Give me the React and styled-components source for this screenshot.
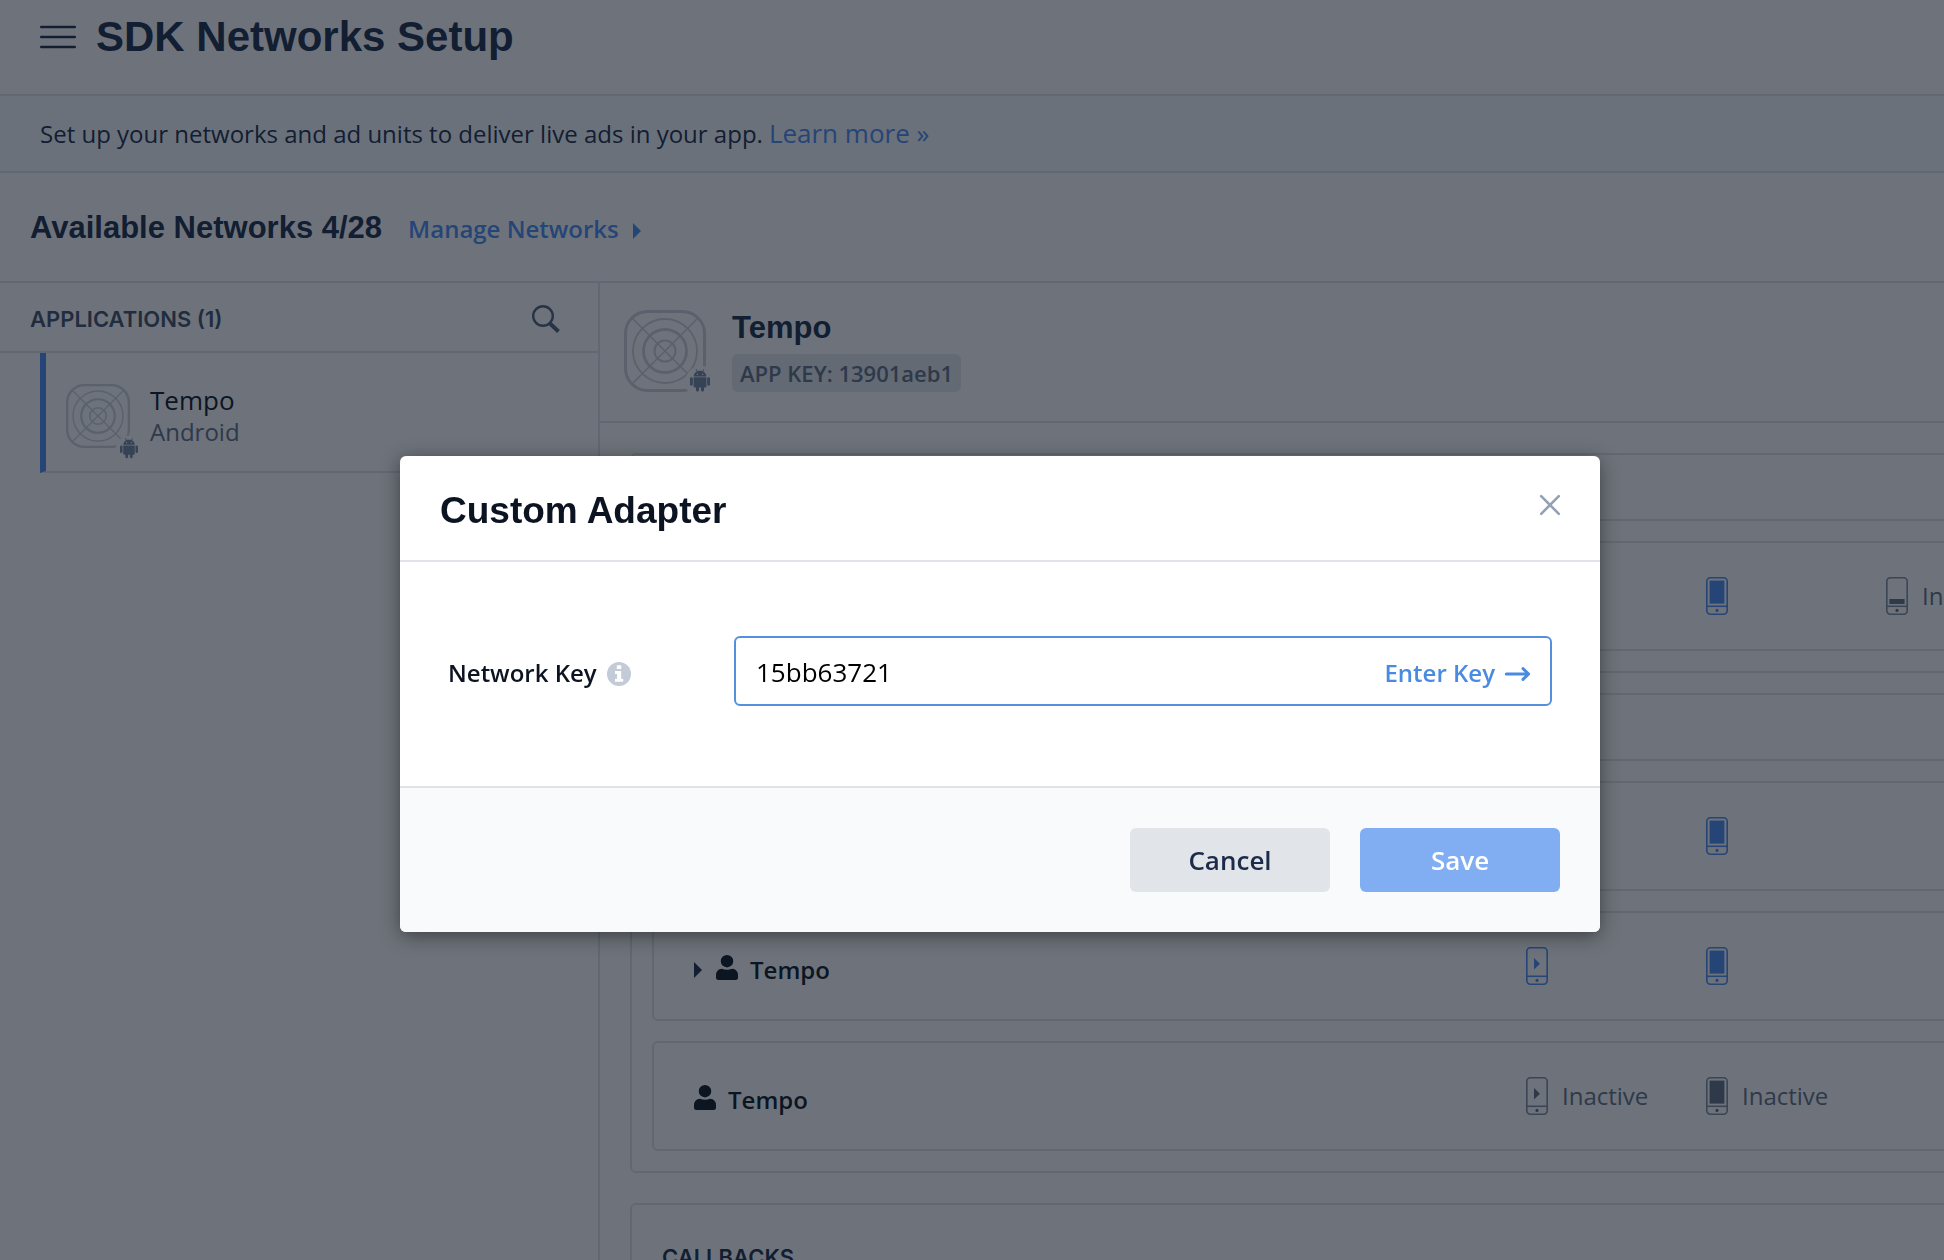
import React, { useId } from "react";
import styled, { createGlobalStyle, css } from "styled-components";

const sans = '"Open Sans", "Noto Sans", sans-serif';
const display = '"Liberation Sans", Arial, sans-serif';

const c = {
  ink: "#1b2b48",
  text: "#0c1422",
  slate: "#5f6f86",
  muted: "#7e8ca0",
  line: "#e0e4ea",
  blue: "#4a8cf4",
};

const GlobalStyle = createGlobalStyle`
  *, *::before, *::after { box-sizing: border-box; }
  body { margin: 0; background: #fff; font-family: ${sans}; color: ${c.ink}; overflow: hidden; }
  button, input { font: inherit; }
  h1, h2, h3, p { margin: 0; }
  svg { display: block; flex: none; overflow: visible; }
`;

const Page = styled.div`
  height: 100vh;
  overflow: hidden;
  display: flex;
  flex-direction: column;
`;

const IconButton = styled.button`
  display: flex;
  padding: 0;
  border: 0;
  background: none;
  color: ${(p) => p.$color};
  cursor: pointer;
`;

const TopBar = styled.header`
  display: flex;
  align-items: center;
  gap: 20px;
  flex: none;
  height: 96px;
  padding: 0 40px 20px;
  border-bottom: 2px solid ${c.line};
`;

const PageTitle = styled.h1`
  font: 700 42px/48px ${display};
`;

const Notice = styled.div`
  display: flex;
  align-items: baseline;
  gap: 6px;
  flex: none;
  padding: 20px 40px;
  background: #f4fbff;
  border-bottom: 2px solid ${c.line};
  font-size: 24px;
  line-height: 35px;
`;

const NoticeLink = styled.a`
  color: ${c.blue};
  font-size: 26px;
  text-decoration: none;
`;

const NetworksBar = styled.section`
  display: flex;
  align-items: baseline;
  gap: 26px;
  flex: none;
  height: 110px;
  padding: 37px 30px 0;
  border-bottom: 2px solid ${c.line};
`;

const SectionTitle = styled.h2`
  font: 700 31px/36px ${display};
`;

const ManageLink = styled.a`
  display: flex;
  align-items: center;
  gap: 14px;
  color: ${c.blue};
  font-size: 24px;
  font-weight: 600;
  line-height: 36px;
  text-decoration: none;
`;

const Columns = styled.div`
  display: grid;
  grid-template-columns: 600px minmax(0, 1fr);
  flex: 1;
  min-height: 0;
`;

const Sidebar = styled.aside`
  border-right: 2px solid ${c.line};
`;

const SidebarHead = styled.div`
  display: flex;
  align-items: center;
  justify-content: space-between;
  height: 70px;
  padding: 4px 38px 0 30px;
  border-bottom: 2px solid ${c.line};
`;

const CapsTitle = styled.h3`
  font: 600 22px/30px Inter, ${display};
  color: ${(p) => p.$color};
`;

const AppItem = styled.a`
  display: flex;
  align-items: center;
  gap: 20px;
  height: 120px;
  margin-left: 40px;
  padding: 8px 20px 0;
  border-left: 6px solid ${c.blue};
  border-bottom: 2px solid ${c.line};
  background: #fcfdfe;
  color: ${c.text};
  text-decoration: none;
`;

const AppText = styled.div`
  display: flex;
  flex-direction: column;
  font-size: 26px;
  line-height: 32px;
`;

const Platform = styled.span`
  color: ${c.slate};
  font-size: 24px;
`;

const Main = styled.main`
  min-width: 0;
  overflow: hidden;
`;

const AppHeader = styled.div`
  display: flex;
  align-items: center;
  gap: 26px;
  height: 140px;
  padding: 0 24px 2px;
  border-bottom: 2px solid ${c.line};
`;

const AppMeta = styled.div`
  display: flex;
  flex-direction: column;
  align-items: flex-start;
  gap: 8px;
`;

const KeyTag = styled.span`
  padding: 0 8px;
  border-radius: 6px;
  background: #e3e8ee;
  color: ${c.slate};
  font-size: 22px;
  font-weight: 600;
  line-height: 38px;
`;

const Boards = styled.div`
  display: flex;
  flex-direction: column;
  width: max-content;
  min-width: 100%;
  padding: 30px;
`;

const Board = styled.section`
  border: 2px solid ${c.line};
  border-radius: 6px;
  margin-bottom: ${(p) => p.$after}px;
`;

const BoardHead = styled.div`
  height: 66px;
  border-bottom: 2px solid ${c.line};
`;

const Rows = styled.div`
  display: flex;
  flex-direction: column;
  gap: 20px;
  padding: 20px;
`;

const Row = styled.div`
  display: grid;
  grid-template-columns: 832px repeat(4, 180px);
  align-items: center;
  height: 110px;
  padding: 0 40px;
  border: 2px solid ${c.line};
  border-radius: 6px;
`;

const Instance = styled.div`
  display: flex;
  align-items: center;
  gap: 12px;
  padding-top: 3px;
  color: ${c.text};
  font-size: 24px;
  font-weight: 600;
`;

const Expander = styled(IconButton)`
  padding-right: 2px;
`;

const InstanceName = styled.span`
  padding-top: 4px;
`;

const AdUnit = styled.div`
  display: flex;
  align-items: center;
  gap: 14px;
  color: ${(p) => (p.$active ? c.blue : c.muted)};
  font-size: 24px;
`;

const Status = styled.span`
  padding-bottom: 2px;
  color: ${c.slate};
`;

const Callbacks = styled.div`
  height: 120px;
  padding: 37px 30px;
`;

const Overlay = styled.div`
  position: fixed;
  inset: 0;
  display: flex;
  align-items: flex-start;
  justify-content: center;
  padding: 456px 0 0 56px;
  background: rgba(13, 22, 35, 0.6);
`;

const Modal = styled.div`
  width: 1200px;
  border-radius: 6px;
  overflow: hidden;
  background: #fff;
  box-shadow: 0 4px 20px rgba(0, 0, 0, 0.45);
`;

const ModalHead = styled.div`
  display: flex;
  justify-content: space-between;
  height: 106px;
  padding: 32px 40px 0;
  border-bottom: 2px solid ${c.line};
`;

const ModalTitle = styled.h2`
  font: 700 37px/46px ${display};
  color: ${c.text};
`;

const CloseButton = styled(IconButton)`
  align-self: flex-start;
  padding-top: 7px;
`;

const ModalBody = styled.div`
  display: grid;
  grid-template-columns: 286px minmax(0, 1fr);
  align-items: center;
  padding: 74px 48px 80px;
`;

const FieldLabel = styled.div`
  display: flex;
  align-items: center;
  gap: 10px;
  padding-top: 5px;
  color: ${c.text};
  font-size: 24px;
  font-weight: 600;
`;

const KeyLabel = styled.label`
  padding-bottom: 2px;
`;

const Field = styled.div`
  display: flex;
  align-items: center;
  height: 70px;
  padding: 0 20px;
  border: 2px solid #5590df;
  border-radius: 6px;
`;

const KeyInput = styled.input`
  flex: 1;
  min-width: 0;
  padding: 2px 0 0;
  border: 0;
  outline: 0;
  background: none;
  color: #000;
  font-size: 26px;
`;

const EnterButton = styled.button`
  display: flex;
  align-items: center;
  gap: 10px;
  padding: 5px 0 0;
  border: 0;
  background: none;
  color: #4a8be2;
  font-size: 24px;
  font-weight: 600;
`;

const EnterText = styled.span`
  padding-bottom: 2px;
`;

const ModalFoot = styled.div`
  display: flex;
  justify-content: flex-end;
  gap: 30px;
  padding: 40px;
  border-top: 2px solid ${c.line};
  background: #f9fafc;
`;

const Button = styled.button`
  width: 200px;
  height: 64px;
  padding: 0;
  border: 0;
  border-radius: 6px;
  background: #e1e4e9;
  color: #1b2b48;
  font-size: 26px;
  font-weight: 600;
  ${(p) =>
    p.$primary &&
    css`
      background: #81aef3;
      color: #fff;
    `}
`;

const Caret = () => (
  <svg width="8" height="20" viewBox="0 0 8 20" fill="currentColor" aria-hidden="true">
    <path d="M0 4L8 12L0 20Z" />
  </svg>
);

const MenuIcon = () => (
  <svg width="36" height="22" viewBox="0 0 36 22" stroke="currentColor" strokeWidth="2.4" strokeLinecap="round" aria-hidden="true">
    <path d="M1.2 1H34.8M1.2 11H34.8M1.2 21H34.8" />
  </svg>
);

const SearchIcon = () => (
  <svg width="28" height="28" viewBox="0 0 28 28" fill="none" stroke="currentColor" aria-hidden="true">
    <circle cx="11" cy="11" r="9.8" strokeWidth="2.4" />
    <path d="M18 18.500L26.500 26.500" strokeWidth="4" />
  </svg>
);

function AppIcon({ size, badge }) {
  const id = useId();
  const k = size / 82;
  return (
    <svg width={size} height={size} viewBox={`0 0 ${size} ${size}`} fill="none" aria-hidden="true">
      <mask id={id} maskUnits="userSpaceOnUse" x="0" y="0" width={size} height={size}>
        <rect width={size} height={size} fill="#fff" />
        <circle cx={badge.x + badge.w / 2 + 1} cy={badge.y + badge.w / 2 + 3} r={badge.w * 0.8} fill="#000" />
      </mask>
      <g mask={`url(#${id})`} stroke="#cdd2db">
        <g transform={`scale(${k})`}>
          <rect x="1.5" y="1.5" width="79" height="79" rx="22" strokeWidth="3" />
          <circle cx="41" cy="41" r="32" strokeWidth="1.8" />
          <circle cx="41" cy="41" r="21.5" strokeWidth="2.8" />
          <circle cx="41" cy="41" r="10.5" strokeWidth="2" />
          <path d="M8 8L74 74M74 8L8 74" strokeWidth="1.6" />
        </g>
      </g>
      <g transform={`translate(${badge.x} ${badge.y}) scale(${badge.w / 20})`} fill="#7385a0">
        <path d="M3.6 7.6C3.7 5.2 5 3.4 6.8 2.5L5.6 .5L6.2 .1L7.5 2.2C9 1.7 11 1.7 12.5 2.2L13.8 .1L14.4 .5L13.2 2.5C15 3.4 16.3 5.2 16.4 7.6ZM7.3 4.500A.7.7 0 1 0 7.3 5.900A.7.7 0 1 0 7.3 4.500ZM12.7 4.500A.7.7 0 1 0 12.7 5.900A.7.7 0 1 0 12.7 4.500Z" fillRule="evenodd" />
        <path d="M3.600 8.300H16.400V17.500Q16.400 18.600 15.300 18.600H4.700Q3.600 18.600 3.600 17.500Z" />
        <rect x="0" y="8.300" width="2.800" height="8.400" rx="1.400" />
        <rect x="17.200" y="8.300" width="2.800" height="8.400" rx="1.400" />
        <rect x="6" y="16" width="3" height="6.500" rx="1.500" />
        <rect x="11" y="16" width="3" height="6.500" rx="1.500" />
      </g>
    </svg>
  );
}

const PersonIcon = () => (
  <svg width="22" height="25" viewBox="0 0 22 25" fill="currentColor" aria-hidden="true">
    <circle cx="11" cy="6.200" r="6.200" />
    <path d="M6 13.800Q11 15.600 16 13.800Q22 14.200 22 20.500V22.500Q22 25 19.500 25H2.500Q0 25 0 22.500V20.500Q0 14.200 6 13.800Z" />
  </svg>
);

const PhoneIcon = ({ kind, active }) => {
  const fill = active ? "currentColor" : c.slate;
  return (
    <svg width="22" height="38" viewBox="0 0 22 38" fill="none" stroke="currentColor" strokeWidth="1.600" aria-hidden="true">
      <rect x=".8" y=".8" width="20.400" height="36.400" rx="3.600" />
      <path d="M1 29.300H21" />
      <circle cx="11" cy="33.400" r="1.600" fill={fill} stroke="none" />
      {kind === "full" && <rect x="3.600" y="3.600" width="14.800" height="23" fill={fill} stroke="none" />}
      {kind === "video" && <path d="M8 11L14 16.800L8 22.500Z" fill={fill} stroke="none" />}
      {kind === "banner" && <rect x="3.400" y="22" width="15.200" height="5" fill={fill} stroke="none" />}
    </svg>
  );
};

const CloseIcon = () => (
  <svg width="20" height="20" viewBox="0 0 20 20" stroke="currentColor" strokeWidth="2.600" strokeLinecap="round" aria-hidden="true">
    <path d="M1.200 1.200L18.800 18.800M18.800 1.200L1.200 18.800" />
  </svg>
);

const InfoIcon = () => (
  <svg width="24" height="24" viewBox="0 0 24 24" aria-hidden="true">
    <circle cx="12" cy="12" r="12" fill="#c3cbd6" />
    <path d="M9.800 3.200H14.200V7H9.800ZM8 9H14.200V16.800H16.200V19.800H8V16.800H10V12H8Z" fill="#fff" />
  </svg>
);

const ArrowIcon = () => (
  <svg width="25" height="14" viewBox="0 0 25 14" fill="none" stroke="currentColor" strokeWidth="3" strokeLinecap="round" strokeLinejoin="round" aria-hidden="true">
    <path d="M1.300 7H23M18 1.600L23.600 7L18 12.400" />
  </svg>
);

const Unit = ({ kind, active }) => (
  <AdUnit $active={active}>
    <PhoneIcon kind={kind} active={active} />
    {!active && <Status>Inactive</Status>}
  </AdUnit>
);

const boards = [
  { after: 20, rows: [{ units: [["video", true], ["full", true], ["banner", false]] }] },
  {
    after: 30,
    rows: [
      { units: [["video", true], ["full", true]] },
      { name: "Tempo", expandable: true, units: [["video", true], ["full", true]] },
      { name: "Tempo", units: [["video", false], ["full", false]] },
    ],
  },
];

export default function App() {
  return (
    <>
      <GlobalStyle />
      <Page>
        <TopBar>
          <IconButton $color={c.ink} aria-label="Menu">
            <MenuIcon />
          </IconButton>
          <PageTitle>SDK Networks Setup</PageTitle>
        </TopBar>
        <Notice>
          <p>Set up your networks and ad units to deliver live ads in your app.</p>
          <NoticeLink href="#learn">Learn more »</NoticeLink>
        </Notice>
        <NetworksBar>
          <SectionTitle>Available Networks 4/28</SectionTitle>
          <ManageLink href="#manage">
            Manage Networks
            <Caret />
          </ManageLink>
        </NetworksBar>
        <Columns>
          <Sidebar>
            <SidebarHead>
              <CapsTitle $color="#3f5068">APPLICATIONS (1)</CapsTitle>
              <IconButton $color="#50627c" aria-label="Search applications">
                <SearchIcon />
              </IconButton>
            </SidebarHead>
            <AppItem href="#tempo">
              <AppIcon size={64} badge={{ x: 54, y: 54, w: 18 }} />
              <AppText>
                Tempo
                <Platform>Android</Platform>
              </AppText>
            </AppItem>
          </Sidebar>
          <Main>
            <AppHeader>
              <AppIcon size={82} badge={{ x: 66, y: 59, w: 20 }} />
              <AppMeta>
                <SectionTitle>Tempo</SectionTitle>
                <KeyTag>APP KEY: 13901aeb1</KeyTag>
              </AppMeta>
            </AppHeader>
            <Boards>
              {boards.map((board, i) => (
                <Board key={i} $after={board.after}>
                  <BoardHead />
                  <Rows>
                    {board.rows.map((row, j) => (
                      <Row key={j}>
                        <Instance>
                          {row.expandable && (
                            <Expander $color={c.ink} aria-label="Expand">
                              <Caret />
                            </Expander>
                          )}
                          {row.name && <PersonIcon />}
                          {row.name && <InstanceName>{row.name}</InstanceName>}
                        </Instance>
                        {row.units.map(([kind, active]) => (
                          <Unit key={kind} kind={kind} active={active} />
                        ))}
                      </Row>
                    ))}
                  </Rows>
                </Board>
              ))}
              <Board $after={0}>
                <Callbacks>
                  <CapsTitle $color={c.ink}>CALLBACKS</CapsTitle>
                </Callbacks>
              </Board>
            </Boards>
          </Main>
        </Columns>
      </Page>
      <Overlay>
        <Modal role="dialog" aria-modal="true" aria-labelledby="dialog-title">
          <ModalHead>
            <ModalTitle id="dialog-title">Custom Adapter</ModalTitle>
            <CloseButton $color="#94a1b5" aria-label="Close">
              <CloseIcon />
            </CloseButton>
          </ModalHead>
          <ModalBody>
            <FieldLabel>
              <KeyLabel htmlFor="network-key">Network Key</KeyLabel>
              <InfoIcon />
            </FieldLabel>
            <Field>
              <KeyInput id="network-key" defaultValue="15bb63721" />
              <EnterButton type="button">
                <EnterText>Enter Key</EnterText>
                <ArrowIcon />
              </EnterButton>
            </Field>
          </ModalBody>
          <ModalFoot>
            <Button type="button">Cancel</Button>
            <Button type="button" $primary>
              Save
            </Button>
          </ModalFoot>
        </Modal>
      </Overlay>
    </>
  );
}
